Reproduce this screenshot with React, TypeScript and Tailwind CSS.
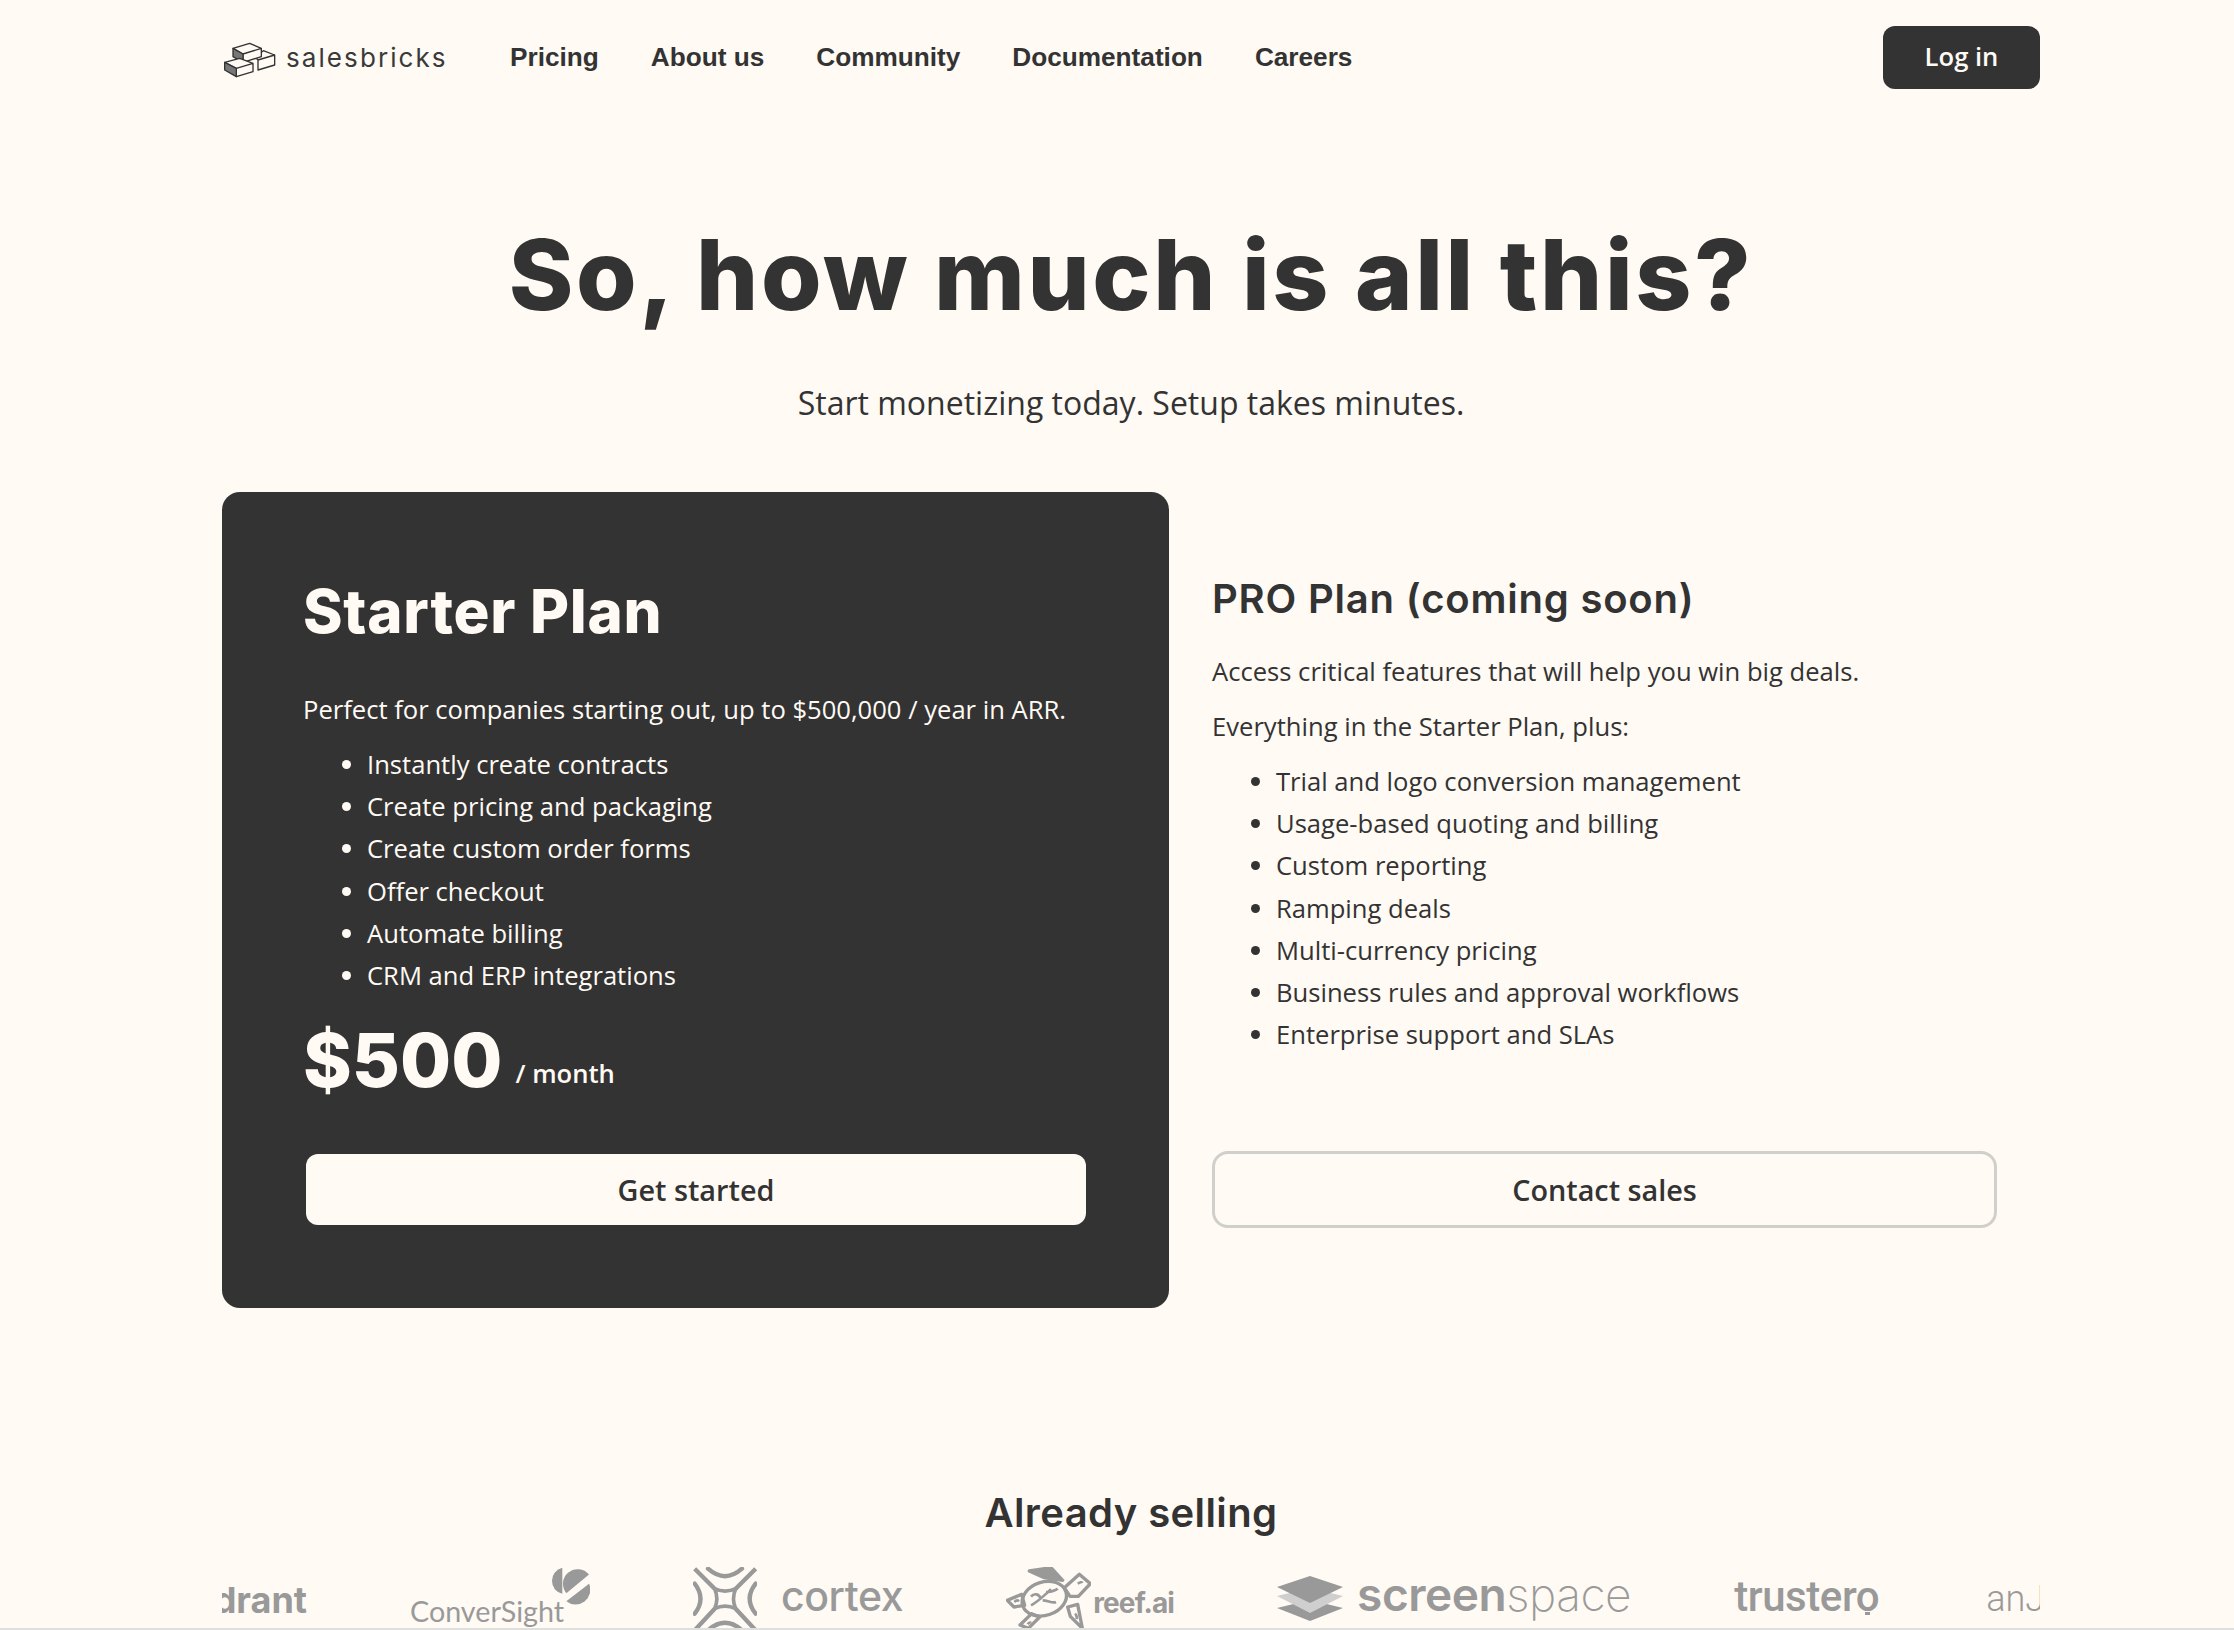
const heading = "font-['Inter',sans-serif]";
const Item = ({ children }: { children: string }) => <li className="h-[42.2px] leading-[42.2px]">{children}</li>;

function BrickLogo() {
  return (
    <svg className="mt-[5px] ml-[1px] shrink-0" width="54" height="36" viewBox="26 36 160 108" fill="none" stroke="#333" strokeWidth="4" strokeLinejoin="round">
      <path d="M122 82L146 62l34 13-50 15z M130 90l50-15v30l-50 15z" fill="#fffaf4" />
      <path d="M55 55l50-15 35 15-55 17z M85 72l55-17v25l-55 17z" fill="#fffaf4" />
      <path d="M55 55l30 17v25L55 80z" fill="#777" />
      <path d="M30 97l45-12 40 15-50 15z M65 115l50-15v25l-50 15z" fill="#fffaf4" />
      <path d="M30 97l35 18v25l-35-20z" fill="#777" />
    </svg>
  );
}
function ConverIcon() {
  return (
    <svg width="42" height="39" viewBox="985 50 126 116" fill="#999">
      <path d="M1028 52A40 40 0 0 0 1028 130Z" />
      <path d="M1040 128A44 44 0 0 1 1108 72Z" />
      <path d="M1108 100A44 44 0 0 1 1040 152Z" />
    </svg>
  );
}
function CortexIcon() {
  return (
    <svg width="64" height="62" viewBox="40 50 192 186" fill="none" stroke="#999" strokeWidth="13">
      <path d="M45 55L105 115M228 55L168 115M45 240L105 175M228 240L168 175" />
      <path d="M105 115Q136 130 168 115Q155 145 168 175Q136 160 105 175Q118 145 105 115Z" strokeWidth="11" />
      <path d="M85 55Q136 100 187 55M85 240Q136 195 187 240M45 100Q80 145 45 190M228 100Q192 145 228 190" strokeLinecap="round" />
    </svg>
  );
}
function TurtleIcon() {
  return (
    <svg width="85" height="62" viewBox="975 50 255 186" fill="none" stroke="#999" strokeWidth="10" strokeLinejoin="round">
      <ellipse cx="1090" cy="145" rx="68" ry="50" transform="rotate(-18 1090 145)" />
      <path d="M1045 62l65-10 35 38-55-8z" fill="#999" />
      <path d="M1150 112l45-40 33 28-36 38-25 0z" />
      <path d="M1022 132l-43 18 20 20 32-5z" />
      <path d="M1052 190l-35 34 25 10 34-34z" />
      <path d="M1160 170l30-8 14 72-36-36z" />
      <path d="M1050 165c20-10 40-30 60-48M1080 145c-6-14-20-18-30-6M1095 125c10 0 30-4 35-10M1085 150c15 0 30 10 40 5M1190 100c8-4 12-6 14-2M1000 155c6-6 10-6 14-2M1040 222c4-6 8-6 10-4M1182 190c6 6 6 12 4 16" strokeWidth="8" />
    </svg>
  );
}
function StackIcon() {
  return (
    <svg width="66" height="45" viewBox="0 0 66 45">
      <path d="M33 24L66 32L33 45L0 32Z" fill="#999" />
      <path d="M33 12L66 20L33 37L0 20Z" fill="#cfcfcf" />
      <path d="M33 0L66 11L33 27L0 11Z" fill="#999" />
    </svg>
  );
}

export default function App() {
  return (
    <div className="h-[1630px] overflow-hidden bg-[#fffaf4] font-['Open_Sans',sans-serif] text-[#333333]">
      <div className="ml-[222px] w-[1818px]">
        <nav className="flex h-[115px] items-center justify-between">
          <div className="flex items-center">
            <div className="flex w-[288px] items-center gap-[9px] font-['Inter',sans-serif] text-[26px] leading-none tracking-[0.08em] text-[#3a3a3a]">
              <BrickLogo />
              <span>salesbricks</span>
            </div>
            <div className="flex gap-[52px] pb-[2px] font-['Liberation_Sans',sans-serif] text-[26.2px] leading-[28px] font-bold">
              <a>Pricing</a>
              <a>About us</a>
              <a>Community</a>
              <a>Documentation</a>
              <a>Careers</a>
            </div>
          </div>
          <button className="h-[63px] w-[157px] rounded-xl bg-[#333333] text-[25.6px] font-semibold text-[#fffaf4]">Log in</button>
        </nav>

        <h1 className={`${heading} mt-[100px] text-center text-[98px] leading-[120px] font-extrabold tracking-[0.026em]`}>So, how much is all this?</h1>
        <p className="mt-[44px] text-center text-[32px] leading-[48px]">Start monetizing today. Setup takes minutes.</p>

        <div className="mt-[65px] flex items-start">
          <div className="h-[816px] w-[947px] rounded-[18px] bg-[#333333] px-[81px] pt-[81px] text-[#fffaf4]">
            <h2 className={`${heading} text-[60px] leading-[76px] font-extrabold tracking-[0.012em]`}>Starter Plan</h2>
            <p className="mt-[40px] text-[25.6px] leading-[42px]">Perfect for companies starting out, up to $500,000 / year in ARR.</p>
            <ul className="mt-[13px] list-disc pl-[64px] text-[25.6px]">
              {["Instantly create contracts", "Create pricing and packaging", "Create custom order forms", "Offer checkout", "Automate billing", "CRM and ERP integrations"].map((t) => <Item key={t}>{t}</Item>)}
            </ul>
            <div className="mt-[15px] flex items-end gap-[13px]">
              <span className={`${heading} text-[74px] leading-[96px] font-extrabold`}>$500</span>
              <span className="pb-[17px] text-[25.6px] leading-[35px] font-semibold">/ month</span>
            </div>
            <button className="mt-[46px] ml-[3px] h-[71px] w-[780px] rounded-xl bg-[#fffaf4] text-[28.8px] font-semibold text-[#333333]">Get started</button>
          </div>

          <div className="ml-[43px] w-[785px] pt-[82px]">
            <h3 className={`${heading} text-[40px] leading-[50px] font-semibold tracking-[0.02em]`}>PRO Plan (coming soon)</h3>
            <p className="mt-[27px] text-[25.6px] leading-[42px]">Access critical features that will help you win big deals.</p>
            <p className="mt-[13px] text-[25.6px] leading-[42px]">Everything in the Starter Plan, plus:</p>
            <ul className="mt-[13px] list-disc pl-[64px] text-[25.6px]">
              {["Trial and logo conversion management", "Usage-based quoting and billing", "Custom reporting", "Ramping deals", "Multi-currency pricing", "Business rules and approval workflows", "Enterprise support and SLAs"].map((t) => <Item key={t}>{t}</Item>)}
            </ul>
            <button className="mt-[95px] h-[77px] w-[785px] rounded-2xl border-[3px] border-[#cfcfcb] text-[28.8px] font-semibold">Contact sales</button>
          </div>
        </div>

        <h2 className={`${heading} mt-[180px] text-center text-[40px] leading-[50px] font-semibold tracking-[0.01em]`}>Already selling</h2>

        <div className="mt-[25px] flex h-[65px] items-start gap-[103px] overflow-hidden whitespace-nowrap text-[#999999]">
          <div className="-ml-[40px] flex h-[65px] w-[125px] shrink-0 items-end justify-end pb-[10px] font-['Inter',sans-serif] text-[36px] leading-none font-bold">qdrant</div>
          <div className="relative h-[65px] w-[180px] shrink-0">
            <span className="absolute bottom-[2px] left-0 font-['Lato',sans-serif] text-[28.7px] leading-none">ConverSight</span>
            <span className="absolute top-[4px] right-0"><ConverIcon /></span>
          </div>
          <div className="flex h-[65px] shrink-0 items-start gap-[24px]">
            <span className="mt-[4px] block"><CortexIcon /></span>
            <span className="mt-[7px] font-['Inter',sans-serif] text-[41px] leading-[52px] font-medium tracking-[-0.01em]">cortex</span>
          </div>
          <div className="flex h-[65px] shrink-0 items-start gap-[2px]">
            <span className="mt-[4px] block"><TurtleIcon /></span>
            <span className="mt-[22px] font-['Inter',sans-serif] text-[28px] leading-[36px] font-bold tracking-[-0.03em]">reef.ai</span>
          </div>
          <div className="flex h-[65px] shrink-0 items-start gap-[14px]">
            <span className="mt-[13px] block"><StackIcon /></span>
            <span className="mt-[3px] font-['Inter',sans-serif] text-[46px] leading-[56px] tracking-[-0.01em]"><b className="font-semibold">screen</b><span className="font-extralight">space</span></span>
          </div>
          <div className="relative h-[65px] shrink-0">
            <span className="mt-[10px] block font-['Roboto',sans-serif] text-[42px] leading-[48px] font-medium tracking-[-0.01em]">trustero</span>
            <span className="absolute top-[49px] right-[9px] h-[3px] w-[5px] bg-[#999999]" />
          </div>
          <span className="mt-[13px] pl-[4px] font-['Roboto',sans-serif] text-[36px] leading-[46px] font-light">anJ</span>
        </div>
      </div>
      <div className="h-[2px] w-full bg-[#dfe0dd]" />
    </div>
  );
}
